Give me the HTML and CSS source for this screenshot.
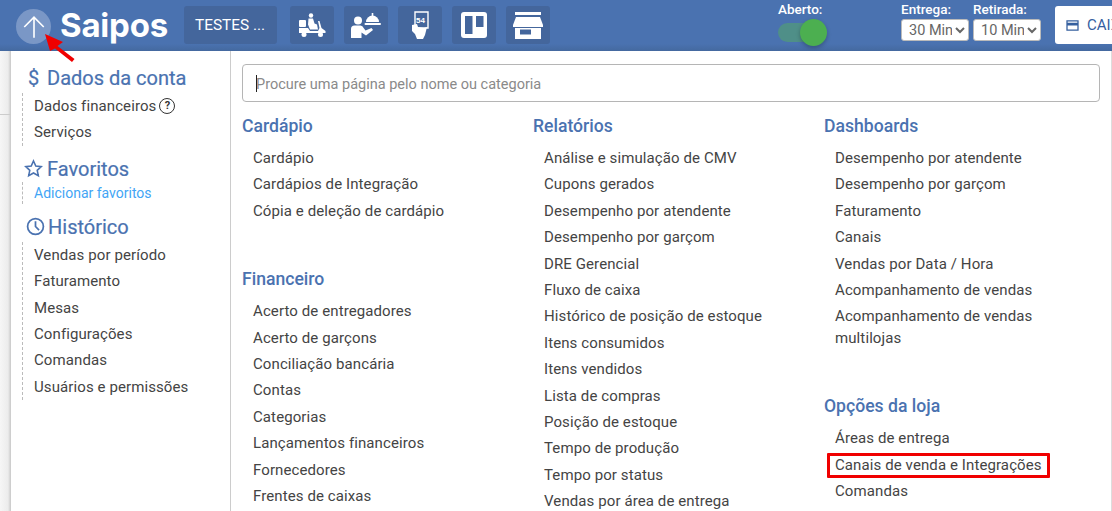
FILE: index.html
```html
<!DOCTYPE html>
<html lang="pt-BR">
<head>
<meta charset="utf-8">
<title>Saipos</title>
<link rel="stylesheet" href="styles.css">
</head>
<body>
<header class="topbar">
  <button class="back" aria-label="Voltar">
    <svg viewBox="0 0 24 24" width="26" height="26"><path d="M12 22V3M3 12l9-9 9 9" fill="none" stroke="#fff" stroke-width="1.500"/></svg>
  </button>
  <span class="logo">Saipos</span>
  <div class="store">TESTES ...</div>
  <div class="tools">
    <div class="tool">
      <svg viewBox="0 0 28 24" width="28" height="24" fill="#fff">
        <circle cx="13" cy="2.500" r="2.200"/>
        <path d="M10.500 5.500h4.500l1.500 5 2.500 1 1 5h-8l-2-5z"/>
        <rect x="1" y="7" width="7" height="7" rx="1"/>
        <path d="M1 15h9l2 3h8l1.500-3 -1.500-7h1.500l2 7 4 3v2H1z"/>
        <circle cx="6" cy="21.500" r="2.500"/><circle cx="22.500" cy="21.500" r="2.500"/>
      </svg>
    </div>
    <div class="tool">
      <svg viewBox="0 0 30 26" width="30" height="26" fill="#fff">
        <circle cx="7" cy="8.500" r="4"/>
        <path d="M0 26V17q0-3.500 3.500-3.500h6q2 0 3.500 3l1.500 2 6-2.500 1.500 2-7 5.500-4.500-3V26z"/>
        <path d="M15 10a6.500 6.500 0 0 1 13 0z"/>
        <rect x="20.700" y="1" width="1.600" height="3"/>
        <rect x="13.500" y="11" width="16.500" height="2" rx="1"/>
      </svg>
    </div>
    <div class="tool">
      <svg viewBox="0 0 18 28" width="18" height="28">
        <path d="M4 1h13v16H4z" fill="none" stroke="#fff" stroke-width="1.400"/>
        <text x="5" y="12" class="ticket-num">54</text>
        <path d="M1 14l5-1 1 3 6 1 3-1-2 8-2 4H6l-2-5-3-3z" fill="#fff"/>
      </svg>
    </div>
    <div class="tool">
      <svg viewBox="0 0 26 26" width="26" height="26">
        <rect width="26" height="26" rx="3" fill="#fff"/>
        <rect x="4" y="4" width="7.500" height="18" fill="#44669c"/>
        <rect x="15" y="4" width="7.500" height="11" fill="#44669c"/>
      </svg>
    </div>
    <div class="tool">
      <svg viewBox="0 0 30 27" width="30" height="27" fill="#fff">
        <rect x="2" y="0" width="26" height="3"/>
        <path d="M3 5h24l3 8v2H0v-2z"/>
        <path d="M2 16h26v11H2zM7 17.500v5h11v-5z" fill-rule="evenodd"/>
      </svg>
    </div>
  </div>
  <div class="status">
    <span class="field-label">Aberto:</span>
    <span class="switch"><i class="knob"></i></span>
  </div>
  <div class="times">
    <label class="time">
      <span class="field-label">Entrega:</span>
      <select class="time-select"><option>30 Min</option></select>
    </label>
    <label class="time">
      <span class="field-label">Retirada:</span>
      <select class="time-select"><option>10 Min</option></select>
    </label>
  </div>
  <div class="cash">
    <svg viewBox="0 0 14 12" width="13" height="11"><path d="M1 1h12v10H1z" fill="none" stroke="#36609f" stroke-width="1.400"/><rect x="1" y="3" width="12" height="3" fill="#36609f"/></svg>
    <span>CAIXA</span>
  </div>
</header>

<div class="page">
  <div class="backdrop"></div>
  <aside class="side">
    <section class="side-group">
      <h2 class="side-title"><span class="dollar">$</span>Dados da conta</h2>
      <ul class="side-list">
        <li>Dados financeiros<span class="help">?</span></li>
        <li>Serviços</li>
      </ul>
    </section>
    <section class="side-group">
      <h2 class="side-title">
        <svg class="side-icon star" viewBox="0 0 24 24" width="19" height="19"><path d="M12 2.500l2.900 6.300 6.900.8-5.100 4.700 1.400 6.800-6.100-3.400-6.100 3.400 1.400-6.800L2.200 9.600l6.900-.8z" fill="none" stroke="#4a72b0" stroke-width="2"/></svg>Favoritos
      </h2>
      <ul class="side-list fav"><li>Adicionar favoritos</li></ul>
    </section>
    <section class="side-group">
      <h2 class="side-title">
        <svg class="side-icon" viewBox="0 0 24 24" width="19" height="19"><circle cx="12" cy="12" r="10" fill="none" stroke="#4a72b0" stroke-width="2.200"/><path d="M12 5.500V12l4.500 4.500" fill="none" stroke="#4a72b0" stroke-width="2.200"/></svg>Histórico
      </h2>
      <ul class="side-list">
        <li>Vendas por período</li>
        <li>Faturamento</li>
        <li>Mesas</li>
        <li>Configurações</li>
        <li>Comandas</li>
        <li>Usuários e permissões</li>
      </ul>
    </section>
  </aside>

  <main class="content">
    <div class="search"><input class="search-input" type="text" placeholder="Procure uma página pelo nome ou categoria"></div>
    <div class="columns">
      <div class="column">
        <section class="menu">
          <h3 class="menu-title">Cardápio</h3>
          <ul class="menu-list">
            <li>Cardápio</li>
            <li>Cardápios de Integração</li>
            <li>Cópia e deleção de cardápio</li>
          </ul>
        </section>
        <section class="menu">
          <h3 class="menu-title">Financeiro</h3>
          <ul class="menu-list">
            <li>Acerto de entregadores</li>
            <li>Acerto de garçons</li>
            <li>Conciliação bancária</li>
            <li>Contas</li>
            <li>Categorias</li>
            <li>Lançamentos financeiros</li>
            <li>Fornecedores</li>
            <li>Frentes de caixas</li>
          </ul>
        </section>
      </div>
      <div class="column">
        <section class="menu">
          <h3 class="menu-title">Relatórios</h3>
          <ul class="menu-list">
            <li>Análise e simulação de CMV</li>
            <li>Cupons gerados</li>
            <li>Desempenho por atendente</li>
            <li>Desempenho por garçom</li>
            <li>DRE Gerencial</li>
            <li>Fluxo de caixa</li>
            <li>Histórico de posição de estoque</li>
            <li>Itens consumidos</li>
            <li>Itens vendidos</li>
            <li>Lista de compras</li>
            <li>Posição de estoque</li>
            <li>Tempo de produção</li>
            <li>Tempo por status</li>
            <li>Vendas por área de entrega</li>
          </ul>
        </section>
      </div>
      <div class="column">
        <section class="menu">
          <h3 class="menu-title">Dashboards</h3>
          <ul class="menu-list">
            <li>Desempenho por atendente</li>
            <li>Desempenho por garçom</li>
            <li>Faturamento</li>
            <li>Canais</li>
            <li>Vendas por Data / Hora</li>
            <li>Acompanhamento de vendas</li>
            <li class="wrap">Acompanhamento de vendas multilojas</li>
          </ul>
        </section>
        <section class="menu">
          <h3 class="menu-title">Opções da loja</h3>
          <ul class="menu-list">
            <li>Áreas de entrega</li>
            <li><span class="marked">Canais de venda e Integrações</span></li>
            <li>Comandas</li>
            <li>Configurações</li>
          </ul>
        </section>
      </div>
    </div>
  </main>
</div>

<svg class="pointer" viewBox="0 0 32 30" width="32" height="30"><path d="M1 1L19 9l-5.500 4L30.500 26 28 29 11 15.500 6 18z" fill="#f00000"/></svg>
</body>
</html>
```
FILE: styles.css
```css
* { box-sizing: border-box; }
html, body { height: 100%; }
body {
  margin: 0;
  height: 511px;
  overflow: hidden;
  position: relative;
  font-family: Roboto, "Liberation Sans", sans-serif;
  color: #333;
  background: #fff;
}
ul { list-style: none; margin: 0; padding: 0; }
h2, h3 { margin: 0; font-weight: 500; color: #4a72b0; }

.topbar {
  height: 51px;
  display: flex;
  align-items: flex-start;
  background: linear-gradient(#4a72b0 0, #4a72b0 44px, #44699f 51px);
  overflow: hidden;
  color: #fff;
}
.back {
  flex: none;
  width: 35px;
  height: 35px;
  margin: 9px 0 0 16px;
  padding: 0;
  border: 0;
  border-radius: 50%;
  background: #7a97c6;
  display: flex;
  align-items: center;
  justify-content: center;
}
.logo {
  flex: none;
  width: 125px;
  margin: 5px 0 0 9px;
  font-family: Inter, sans-serif;
  font-size: 33px;
  line-height: 40px;
  font-weight: 700;
  letter-spacing: -0.2px;
  color: #fff;
}
.store {
  flex: none;
  width: 93px;
  height: 38px;
  margin: 6px 0 0 -1px;
  padding-left: 11px;
  border-radius: 3px;
  background: #44669c;
  font-size: 15.400px;
  line-height: 39px;
  color: #fff;
}
.tools {
  flex: none;
  display: flex;
  gap: 10px;
  margin: 6px 0 0 13px;
}
.tool {
  width: 44px;
  height: 38px;
  border-radius: 3px;
  background: #44669c;
  display: flex;
  align-items: center;
  justify-content: center;
}
.ticket-num {
  font-family: "Liberation Sans", sans-serif;
  font-size: 8px;
  font-weight: 700;
  fill: #fff;
}
.field-label {
  display: block;
  font-size: 13.500px;
  line-height: 15px;
  font-weight: 500;
  color: #fff;
}
.status {
  flex: none;
  width: 50px;
  margin: 2px 0 0 228px;
  position: relative;
}
.switch {
  display: block;
  width: 36px;
  height: 19px;
  margin-top: 6px;
  border-radius: 10px;
  background: #4f8f88;
  position: relative;
}
.knob {
  position: absolute;
  left: 22px;
  top: -4px;
  width: 27px;
  height: 27px;
  border-radius: 50%;
  background: #4caf50;
  box-shadow: 0 2px 4px rgba(0,0,0,.25);
}
.times {
  flex: none;
  display: flex;
  gap: 4px;
  margin: 2px 0 0 73px;
}
.time { display: block; }
.time-select {
  display: block;
  width: 68px;
  height: 22px;
  margin-top: 2px;
  padding: 0 0 0 3px;
  border: 1px solid #bbb;
  border-radius: 3px;
  background: #fff;
  font-family: Roboto, sans-serif;
  font-size: 14.500px;
  color: #666;
}
.cash {
  flex: none;
  width: 100px;
  height: 38px;
  margin: 6px 0 0 14px;
  padding-left: 11px;
  display: flex;
  align-items: center;
  gap: 8px;
  border-radius: 3px;
  background: #fff;
  font-size: 15px;
  color: #36609f;
}

.page {
  height: 460px;
  display: flex;
  overflow: hidden;
  position: relative;
  border-right: 1px solid #ddd;
}
.page::before {
  content: "";
  position: absolute;
  right: -1px;
  top: 13px;
  width: 1px;
  height: 39px;
  background: #4caf50;
}
.page::after {
  content: "";
  position: absolute;
  right: -1px;
  top: 192px;
  width: 1px;
  height: 9px;
  background: #111;
}
.backdrop {
  flex: none;
  width: 11px;
  background:
    linear-gradient(#ccc, #ccc) 0 63px / 100% 1px no-repeat,
    linear-gradient(90deg, #f6f6f6, #ececec 8px, #c8c8c8);
}
.side {
  flex: none;
  width: 220px;
  padding-top: 13px;
  border-right: 1px solid #ccc;
}
.side-group { margin-bottom: 9px; }
.side-title {
  display: flex;
  align-items: center;
  height: 28px;
  margin-left: 15px;
  font-size: 20px;
  font-weight: 400;
  -webkit-text-stroke: 0.2px #4a72b0;
}
.dollar { width: 21px; padding-left: 2px; font-size: 20px; }
.side-icon { margin-right: 3px; flex: none; }
.side-icon.star { margin: 0 4px 0 -2px; }
.side-list {
  margin: 1px 0 0 11px;
  padding-left: 11px;
  border-left: 1px dashed #bbb;
  font-size: 15px;
  letter-spacing: 0.1px;
  color: #444;
}
.side-list li { height: 26.400px; line-height: 26.400px; display: flex; align-items: center; }
.side-list.fav { margin-top: -1px; font-size: 14px; letter-spacing: 0; color: #42a5f5; }
.side-list.fav li { height: 22px; line-height: 22px; }
.help {
  width: 16px;
  height: 16px;
  margin-left: 3px;
  border: 1.200px solid #333;
  border-radius: 50%;
  font-size: 11px;
  line-height: 14px;
  font-weight: 700;
  letter-spacing: 0;
  text-align: center;
  color: #333;
}

.content {
  flex: 1;
  min-width: 0;
  padding: 13px 11px 0;
  overflow: hidden;
}
.search { position: relative; }
.search::before {
  content: "";
  position: absolute;
  left: 14px;
  top: 11px;
  width: 1px;
  height: 17px;
  background: #222;
}
.search-input {
  display: block;
  width: 100%;
  height: 38px;
  padding: 2px 13px 0;
  border: 1px solid #b5b5b5;
  border-radius: 4px;
  background: #fff;
  font-family: Roboto, sans-serif;
  font-size: 14.500px;
  color: #333;
  outline: 0;
}
.search-input::placeholder { color: #8a8a8a; opacity: 1; }
.columns {
  display: grid;
  grid-template-columns: repeat(3, 291px);
  margin-top: 11px;
}
.menu-title { font-size: 17.600px; line-height: 26px; }
.menu { padding-bottom: 42px; }
.menu-list {
  padding: 6px 0 0 11px;
  font-size: 15px;
  letter-spacing: 0.1px;
  color: #444;
}
.menu-list li { min-height: 26.400px; line-height: 26.400px; }
.menu-list li.wrap { line-height: 22px; padding: 2px 0; max-width: 220px; }
.marked {
  display: inline-block;
  margin-left: -8px;
  padding: 0 5px;
  border: 3px solid #f00000;
  border-radius: 1px;
  line-height: 19px;
  vertical-align: middle;
}
.pointer {
  position: absolute;
  left: 44px;
  top: 33px;
}
```
